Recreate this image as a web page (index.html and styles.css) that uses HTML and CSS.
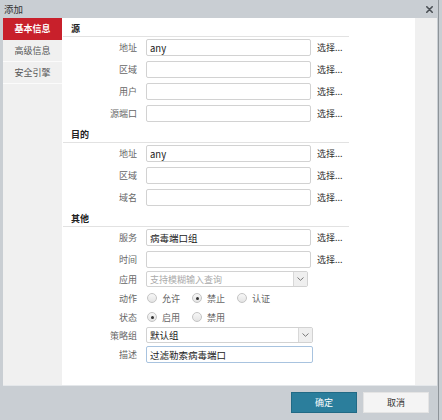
FILE: index.html
```html
<!DOCTYPE html>
<html lang="zh">
<head>
<meta charset="utf-8">
<title>添加</title>
<link rel="stylesheet" href="styles.css">
</head>
<body>
<div class="win">
  <div class="titlebar">
    <span class="title">添加</span>
    <svg class="close" width="7" height="7" viewBox="0 0 7 7"><path d="M0.8 0.8 L6.2 6.2 M6.2 0.8 L0.8 6.2" stroke="#4a4f54" stroke-width="1.6" stroke-linecap="round"/></svg>
  </div>
  <div class="main">
    <nav class="nav">
      <div class="nav-item active">基本信息</div>
      <div class="nav-item">高级信息</div>
      <div class="nav-item">安全引擎</div>
    </nav>
    <div class="content">
      <div class="form">
        <div class="sec-head">源</div>
        <div class="row"><span class="label">地址</span><span class="input">any</span><span class="pick">选择...</span></div>
        <div class="row"><span class="label">区域</span><span class="input"></span><span class="pick">选择...</span></div>
        <div class="row"><span class="label">用户</span><span class="input"></span><span class="pick">选择...</span></div>
        <div class="row"><span class="label">源端口</span><span class="input"></span><span class="pick">选择...</span></div>

        <div class="sec-head">目的</div>
        <div class="row"><span class="label">地址</span><span class="input">any</span><span class="pick">选择...</span></div>
        <div class="row"><span class="label">区域</span><span class="input"></span><span class="pick">选择...</span></div>
        <div class="row"><span class="label">域名</span><span class="input"></span><span class="pick">选择...</span></div>

        <div class="sec-head">其他</div>
        <div class="row"><span class="label">服务</span><span class="input">病毒端口组</span><span class="pick">选择...</span></div>
        <div class="row"><span class="label">时间</span><span class="input"></span><span class="pick">选择...</span></div>
        <div class="row tight"><span class="label">应用</span>
          <span class="select narrow"><span class="placeholder">支持模糊输入查询</span><span class="arrow"><svg width="7" height="4" viewBox="0 0 7 4"><path d="M0.5 0.5 L3.5 3.3 L6.5 0.5" fill="none" stroke="#777" stroke-width="1"/></svg></span></span>
        </div>
        <div class="row tight"><span class="label">动作</span>
          <span class="radios">
            <span class="opt"><span class="radio"></span>允许</span>
            <span class="opt"><span class="radio on"></span>禁止</span>
            <span class="opt"><span class="radio"></span>认证</span>
          </span>
        </div>
        <div class="row tight"><span class="label">状态</span>
          <span class="radios">
            <span class="opt"><span class="radio on"></span>启用</span>
            <span class="opt"><span class="radio"></span>禁用</span>
          </span>
        </div>
        <div class="row snug"><span class="label">策略组</span>
          <span class="select wide"><span class="value">默认组</span><span class="arrow"><svg width="7" height="4" viewBox="0 0 7 4"><path d="M0.5 0.5 L3.5 3.3 L6.5 0.5" fill="none" stroke="#777" stroke-width="1"/></svg></span></span>
        </div>
        <div class="row tight"><span class="label">描述</span><span class="input wide focus">过滤勒索病毒端口</span></div>
      </div>
    </div>
    <div class="strip"></div>
  </div>
  <div class="footer">
    <button class="btn primary">确定</button>
    <button class="btn">取消</button>
  </div>
</div>
</body>
</html>
```
FILE: styles.css
```css
html, body {
  margin: 0;
  padding: 0;
}
body {
  width: 442px;
  height: 420px;
  overflow: hidden;
  background: linear-gradient(to right, #c9ced3 0, #c9ced3 438px, #8e9499 438px, #8e9499 439px, #c9ced3 439px);
  font-family: "Noto Sans CJK SC", "Noto Sans", sans-serif;
  font-size: 9px;
  color: #333;
}
.win {
  display: flex;
  flex-direction: column;
  height: 420px;
}
.titlebar {
  height: 18px;
  display: flex;
  align-items: center;
  justify-content: space-between;
  padding: 0 9px 0 4px;
}
.title {
  font-size: 9.5px;
  color: #333;
}
.main {
  display: flex;
  height: 367px;
  margin: 0 5px 0 3px;
  border-bottom: 1px solid #e4e7ea;
}
.nav {
  width: 59px;
  background: #f0f0f0;
  display: flex;
  flex-direction: column;
}
.nav-item {
  height: 21px;
  line-height: 21px;
  text-align: center;
  color: #555;
  border-bottom: 1px solid #fbfbfb;
}
.nav-item.active {
  background: #c8202b;
  color: #fff;
  font-weight: bold;
  border-bottom-color: #c8202b;
}
.content {
  flex: 1;
  background: #fff;
  padding-top: 3px;
}
.strip {
  width: 22px;
  background: #f0f0f0;
}
.form {
  width: 286px;
  margin-left: 1px;
  display: flex;
  flex-direction: column;
}
.sec-head {
  height: 15px;
  line-height: 15px;
  padding-left: 8px;
  border-bottom: 1px solid #e2e2e2;
  color: #222;
  font-weight: bold;
  margin-top: 5px;
}
.sec-head:first-child {
  margin-top: 0;
}
.row {
  display: flex;
  align-items: center;
  height: 17px;
  margin-top: 5px;
}
.sec-head + .row {
  margin-top: 2px;
}
.row.tight {
  margin-top: 3px;
  height: 16px;
}
.row.snug {
  margin-top: 2px;
  height: 16px;
}
.row.tight:last-child {
  height: 17px;
}
.label {
  width: 74px;
  margin-right: 9px;
  text-align: right;
  color: #666;
}
.input {
  box-sizing: border-box;
  width: 165px;
  height: 100%;
  border: 1px solid #d2d2d2;
  border-radius: 2px;
  background: #fff;
  padding: 0 3px;
  display: flex;
  align-items: center;
  font-size: 9.5px;
  color: #222;
}
.input.wide {
  width: 167px;
}
.input.focus {
  border-color: #a8c3df;
}
.pick {
  margin-left: 6px;
  color: #333;
}
.select {
  box-sizing: border-box;
  height: 100%;
  border: 1px solid #d2d2d2;
  border-radius: 2px;
  background: #fff;
  display: flex;
  align-items: stretch;
  font-size: 9.5px;
}
.select.narrow {
  width: 162px;
}
.select.wide {
  width: 167px;
}
.placeholder, .value {
  flex: 1;
  padding-left: 3px;
  display: flex;
  align-items: center;
}
.placeholder {
  color: #aaa;
  font-size: 9px;
}
.value {
  color: #222;
}
.arrow {
  width: 13px;
  background: #efefef;
  border-left: 1px solid #d8d8d8;
  display: flex;
  align-items: center;
  justify-content: center;
}
.radios {
  display: flex;
  padding-left: 1px;
}
.opt {
  width: 45px;
  display: flex;
  align-items: center;
  color: #666;
}
.radio {
  box-sizing: border-box;
  width: 10px;
  height: 10px;
  border-radius: 50%;
  border: 1px solid #c4c4c4;
  background: linear-gradient(#f7f7f7, #e4e4e4);
  margin-right: 5px;
  position: relative;
}
.radio.on::after {
  content: "";
  position: absolute;
  left: 2.5px;
  top: 2.5px;
  width: 3px;
  height: 3px;
  border-radius: 50%;
  background: #333;
}
.footer {
  display: flex;
  justify-content: flex-end;
  gap: 6px;
  padding: 6px 13px 0 0;
}
.btn {
  box-sizing: border-box;
  width: 66px;
  height: 21px;
  font-family: "Noto Sans CJK SC", "Noto Sans", sans-serif;
  font-size: 9px;
  border: 1px solid #e4e4e4;
  background: #f4f4f4;
  color: #333;
  padding: 0;
  border-radius: 0;
}
.btn.primary {
  background: #2b7e9c;
  border-color: #216a85;
  color: #fff;
}
```
